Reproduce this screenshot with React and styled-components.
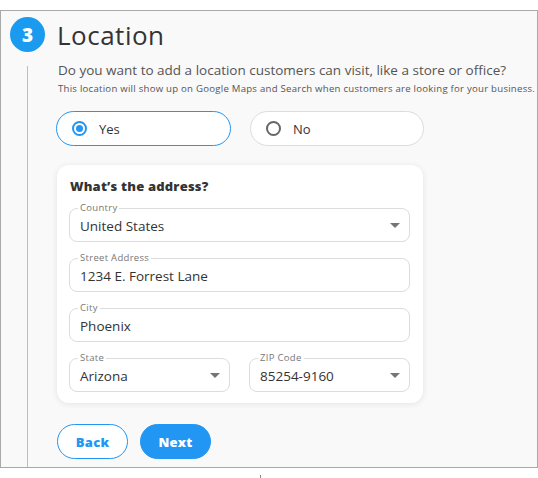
import React from "react";
import styled, { createGlobalStyle } from "styled-components";

const Global = createGlobalStyle`
  html, body { margin: 0; padding: 0; background: #ffffff; }
  body { font-family: "Open Sans", "Liberation Sans", sans-serif; }
  * { box-sizing: border-box; }
`;

const Page = styled.div`
  width: 538px;
  padding-top: 10px;
`;

const Frame = styled.section`
  width: 538px;
  height: 458px;
  border: 1px solid #a9a9a9;
  background: #f9f9f9;
  padding: 6px 0 0 9px;
  display: flex;
  flex-direction: column;
`;

const Header = styled.div`
  display: flex;
  align-items: center;
  gap: 12px;
  height: 35px;
`;

const Badge = styled.div`
  width: 35px;
  height: 35px;
  border-radius: 50%;
  background: #1a9bf0;
  color: #fff;
  font-weight: 800;
  font-size: 19px;
  display: flex;
  align-items: center;
  justify-content: center;
`;

const Title = styled.h1`
  margin: 0;
  font-size: 26px;
  font-weight: 400;
  color: #343434;
  letter-spacing: 0.5px;
`;

const Body = styled.div`
  flex: 1;
  display: flex;
`;

const Rail = styled.div`
  width: 48px;
  display: flex;
  padding-top: 14px;
`;

const RailLine = styled.div`
  width: 1px;
  margin-left: 17px;
  background: #bdbdbd;
`;

const Content = styled.div`
  flex: 1;
  display: flex;
  flex-direction: column;
  padding-top: 9px;
`;

const Question = styled.p`
  margin: 0;
  font-size: 13.5px;
  line-height: 18px;
  color: #555;
  letter-spacing: 0;
`;

const Sub = styled.p`
  margin: 3px 0 0;
  font-size: 9.6px;
  line-height: 14px;
  color: #555;
  letter-spacing: 0.25px;
`;

const Choices = styled.div`
  display: flex;
  gap: 19px;
  margin-top: 15px;
  margin-left: -2px;
`;

const Choice = styled.div`
  width: ${(p) => p.$w}px;
  height: 35px;
  border-radius: 18px;
  background: #fff;
  border: 1px solid ${(p) => (p.$on ? "#2196f3" : "#dcdcdc")};
  display: flex;
  align-items: center;
  padding-left: 15px;
  gap: 12px;
  font-size: 13px;
  color: #333;
`;

const Radio = styled.span`
  width: 15px;
  height: 15px;
  border-radius: 50%;
  border: 2px solid ${(p) => (p.$on ? "#2196f3" : "#666")};
  display: flex;
  align-items: center;
  justify-content: center;
  &::after {
    content: "";
    width: 7px;
    height: 7px;
    border-radius: 50%;
    background: ${(p) => (p.$on ? "#2196f3" : "transparent")};
  }
`;

const Card = styled.div`
  width: 366px;
  margin-top: 19px;
  margin-left: -1px;
  background: #fff;
  border-radius: 12px;
  box-shadow: 0 1px 6px rgba(0, 0, 0, 0.09);
  padding: 13px 13px 11px 12px;
  display: flex;
  flex-direction: column;
`;

const CardTitle = styled.h2`
  margin: 0 0 14px 1px;
  font-size: 13px;
  line-height: 16px;
  font-weight: 800;
  color: #333;
  letter-spacing: 0.2px;
`;

const Fields = styled.div`
  display: grid;
  grid-template-columns: 1fr 1fr;
  column-gap: 19px;
  row-gap: 16px;
`;

const Field = styled.div`
  position: relative;
  grid-column: ${(p) => (p.$half ? "auto" : "1 / -1")};
  height: 34px;
  border: 1px solid #dcdcdc;
  border-radius: 8px;
  display: flex;
  align-items: center;
  justify-content: space-between;
  padding: 1px 9px 0 10px;
  font-size: 13.5px;
  color: #333;
`;

const Label = styled.span`
  position: absolute;
  top: -6px;
  left: 8px;
  padding: 0 2px;
  background: #fff;
  font-size: 9.5px;
  line-height: 10px;
  letter-spacing: 0.3px;
  color: #777;
`;

const Caret = styled.span`
  width: 0;
  height: 0;
  border-left: 5px solid transparent;
  border-right: 5px solid transparent;
  border-top: 5px solid #757575;
`;

const Actions = styled.div`
  display: flex;
  gap: 12px;
  margin-top: 21px;
  margin-left: -1px;
`;

const Button = styled.button`
  width: 71px;
  height: 35px;
  border-radius: 18px;
  border: 1px solid #2196f3;
  background: ${(p) => (p.$primary ? "#2196f3" : "#fff")};
  color: ${(p) => (p.$primary ? "#fff" : "#2196f3")};
  font-family: inherit;
  font-weight: 800;
  font-size: 13px;
  letter-spacing: 0.3px;
  padding: 0;
`;

const Tick = styled.div`
  width: 1px;
  height: 4px;
  margin: 7px 0 0 260px;
  background: #888;
`;

const fields = [
  { label: "Country", value: "United States", select: true },
  { label: "Street Address", value: "1234 E. Forrest Lane" },
  { label: "City", value: "Phoenix" },
  { label: "State", value: "Arizona", select: true, half: true },
  { label: "ZIP Code", value: "85254-9160", select: true, half: true },
];

export default function App() {
  return (
    <Page>
      <Global />
      <Frame>
        <Header>
          <Badge>3</Badge>
          <Title>Location</Title>
        </Header>
        <Body>
          <Rail>
            <RailLine />
          </Rail>
          <Content>
            <Question>
              Do you want to add a location customers can visit, like a store or office?
            </Question>
            <Sub>
              This location will show up on Google Maps and Search when customers are looking for your business.
            </Sub>
            <Choices>
              <Choice $on $w={175}>
                <Radio $on />
                Yes
              </Choice>
              <Choice $w={174}>
                <Radio />
                No
              </Choice>
            </Choices>
            <Card>
              <CardTitle>What’s the address?</CardTitle>
              <Fields>
                {fields.map((f) => (
                  <Field key={f.label} $half={f.half}>
                    <Label>{f.label}</Label>
                    {f.value}
                    {f.select && <Caret />}
                  </Field>
                ))}
              </Fields>
            </Card>
            <Actions>
              <Button>Back</Button>
              <Button $primary>Next</Button>
            </Actions>
          </Content>
        </Body>
      </Frame>
      <Tick />
    </Page>
  );
}
